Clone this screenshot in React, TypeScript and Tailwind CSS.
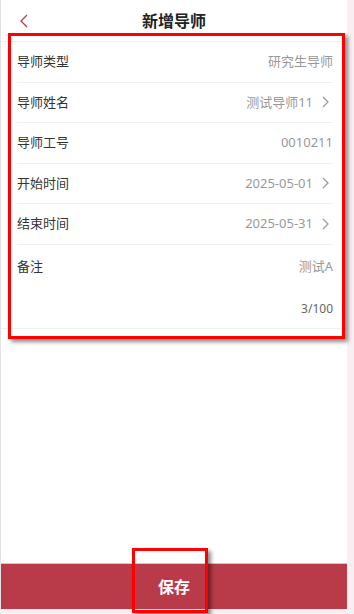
import { useState } from "react";

type Row = { label: string; value: string; arrow?: boolean };

const rows: Row[] = [
  { label: "导师类型", value: "研究生导师" },
  { label: "导师姓名", value: "测试导师11", arrow: true },
  { label: "导师工号", value: "0010211" },
  { label: "开始时间", value: "2025-05-01", arrow: true },
  { label: "结束时间", value: "2025-05-31", arrow: true },
];

function Chevron() {
  return (
    <svg width="16" height="16" viewBox="0 0 16 16" className="shrink-0">
      <path d="M6 3 L11 8 L6 13" fill="none" stroke="#999" strokeWidth="1.2" />
    </svg>
  );
}

export default function App() {
  const [remark] = useState("测试A");

  return (
    <div
      className="relative w-[354px] h-[614px] bg-[#f9eff2] overflow-hidden"
      style={{ fontFamily: '"Noto Sans", "Noto Sans CJK SC", sans-serif' }}
    >
      <div className="w-[347px] h-[609px] bg-white border-l border-[#e3e3e3] flex flex-col">
        {/* 顶部栏 */}
        <div className="h-[42px] shrink-0 border-b border-[#eeeeee] flex items-center relative">
          <svg width="10" height="14" viewBox="0 0 10 14" className="ml-[18px]">
            <path d="M8 1 L2 7 L8 13" fill="none" stroke="#c0394a" strokeWidth="1.3" />
          </svg>
          <div className="absolute left-0 right-0 text-center text-[16px] font-bold text-[#222] leading-none">
            新增导师
          </div>
        </div>

        {/* 表单 */}
        <div className="pl-[16px] pr-[14px]">
          {rows.map((row) => (
            <div
              key={row.label}
              className="h-[40.5px] border-b border-[#f0f0f0] flex items-center justify-between text-[13px]"
            >
              <span className="text-[#333]">{row.label}</span>
              <span className="flex items-center gap-[4px] text-[#999]">
                {row.value}
                {row.arrow && <Chevron />}
              </span>
            </div>
          ))}
          <div className="pt-[12px] pb-[9px] text-[13px]">
            <div className="flex items-center justify-between h-[20px]">
              <span className="text-[#333]">备注</span>
              <span className="text-[#999]">{remark}</span>
            </div>
            <div className="mt-[22px] h-[20px] flex items-center justify-end text-[12px] text-[#666]">
              {remark.length}/100
            </div>
          </div>
        </div>
        <div className="border-b border-[#f0f0f0]" />

        <div className="flex-1" />

        {/* 保存 */}
        <div className="h-[46px] shrink-0 border-t border-[#c8c8c8] bg-[#b93a48] flex items-center justify-center text-white text-[16px] font-bold">
          保存
        </div>
      </div>

      {/* 标注框 */}
      <div className="absolute left-[8px] top-[33px] w-[337px] h-[306px] border-[3px] border-[#ff0000] shadow-[3px_3px_4px_rgba(0,0,0,0.45)]" />
      <div className="absolute left-[132px] top-[548px] w-[76px] h-[65px] border-[3px] border-[#ff0000] shadow-[3px_3px_4px_rgba(0,0,0,0.45)]" />
    </div>
  );
}
